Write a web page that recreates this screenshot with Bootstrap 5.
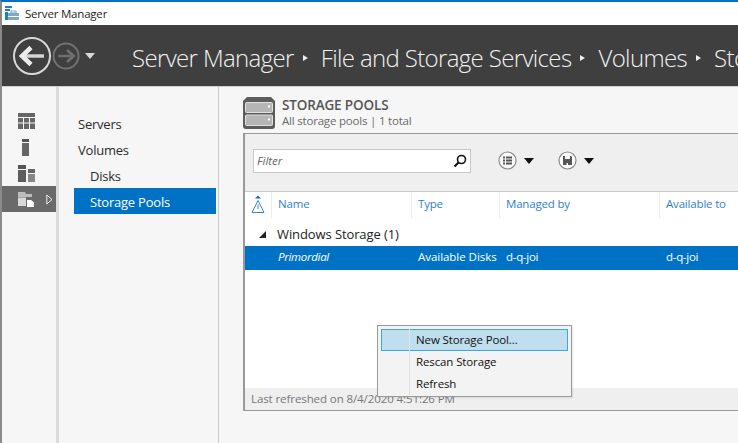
<!DOCTYPE html>
<html lang="en"><head><meta charset="utf-8"><title>Server Manager</title>
<link href="https://cdn.jsdelivr.net/npm/bootstrap@5.3.0/dist/css/bootstrap.min.css" rel="stylesheet">
<style>
html,body{height:100%;overflow:hidden}
body{font-family:"Open Sans","Noto Sans",sans-serif;font-size:12px;background:#f6f6f6;color:#1e1e1e}
.shell{width:738px;height:443px;border-top:2px solid #0072c6;border-left:2px solid #8a8a8a;position:relative;overflow:hidden}
.titlebar{height:23px;background:#fff;font-size:11.5px;letter-spacing:-.2px;padding-left:3px;gap:5px}
.headbar{height:62px;background:#3f3f3f;border-bottom:1px solid #cfcfcf;color:#f2f2f2;white-space:nowrap;overflow:hidden;padding-left:11px}
.navarrows{flex:none}
.crumbs{margin-left:35px;padding-top:4px;font-size:24px;letter-spacing:-.64px;font-weight:300;flex:none}
.crumbs i{display:inline-block;border-left:5px solid #eee;border-top:3.5px solid transparent;border-bottom:3.5px solid transparent;margin:0 13px 4px 9px;vertical-align:middle}
.work{height:356px}
.rail{width:54px;flex:none;padding-top:21px}
.railitem{height:26px;padding-left:16px}
.railarrow{margin-left:11px}
.railnarrow{margin-left:4px}
.railon{background:#6a6a6a}
.split{width:3px;background:#dcdcdc;flex:none}
.navcol{width:160px;flex:none;border-right:1px solid #c8c8c8;padding:23px 2px 0 15px;font-size:13px;letter-spacing:-.22px}
.navline{height:26px;padding-left:4px;padding-top:4px;color:#2b2b2b}
.navsub{padding-left:16px}
.navon{background:#0072c6;color:#fff}
.maincol{flex:1;min-width:0;padding:10px 0 0 24px}
.headtitle{gap:3px;height:36px}
.pooltitle{font-weight:600;font-size:13.5px;letter-spacing:-.15px;color:#555;line-height:15px;margin-top:1px}
.poolsub{color:#6b6b6b;font-size:11.5px;letter-spacing:-.2px;line-height:16px}
.panel{height:278px;width:560px;border:1px solid #999;border-right:0;border-left-width:2px;background:#fff}
.toolbar{height:58px;background:#efefef;border-bottom:1px solid #c8c8c8;padding:0 0 4px 8px;flex:none}
.filterbox{width:218px;height:24px;background:#fff;border:1px solid #c8c8c8;font-style:italic;color:#666;padding:0 3px;font-size:11.5px}
.toolbtn{gap:7px}
.caret{border-top:6px solid #111;border-left:5.5px solid transparent;border-right:5.5px solid transparent}
.colhead{height:26px;flex:none;color:#2f7fc9;font-size:11.5px;letter-spacing:-.18px}
.colhead>div{padding:0 0 2px 6px;border-left:1px solid #ececec;height:100%;display:flex;align-items:center}
.c0{width:26px;flex:none;padding-left:0!important;border-left:0!important;justify-content:center}
.c1{width:140px;flex:none}.c2{width:88px;flex:none}.c3{width:160px;flex:none}.c4{flex:1}
.groupline{height:28px;padding:5px 0 0 14px;color:#222;font-size:13px;letter-spacing:-.1px;gap:11px;flex:none}
.tri{width:0;height:0;border-bottom:7px solid #222;border-left:7px solid transparent}
.rowsel{height:24px;background:#0072c6;color:#fff;font-size:11.5px;letter-spacing:-.3px;flex:none;padding-bottom:2px}
.rowsel>div{padding-left:7px}
.rowsel>.c2{letter-spacing:-.04px}
.foot{height:22px;flex:none;background:#efefef;color:#777;font-size:11.5px;letter-spacing:-.09px;padding-left:6px}
.ctxmenu{position:absolute;left:375px;top:323px;width:195px;height:72px;background:#f3f3f3;border:1px solid #999;padding:3px;font-size:11.5px;letter-spacing:-.12px;color:#111;box-shadow:1px 1px 2px rgba(0,0,0,.1)}
.ctxitem{height:22px;padding-left:34px;border:1px solid transparent;position:relative}
.ctxitem::before{content:"";position:absolute;left:27px;top:-1px;bottom:-1px;width:1px;background:#e2e2e2}
.ctxon{background:#bfdfee;border-color:#3ba5e0}
</style></head><body>
<div class="shell">
<div class="titlebar d-flex align-items-center">
<svg width="15" height="15" viewBox="0 0 15 15"><rect x="0" y="0" width="7" height="2" fill="#1b80c8"/><rect x="0" y="3" width="5" height="2" fill="#1b80c8"/><rect x="0" y="6" width="3" height="8" fill="#1b80c8"/><rect x="3" y="7" width="11" height="7" rx="1" fill="#7fa8c0"/><rect x="6" y="5" width="5" height="2" fill="none" stroke="#7fa8c0"/><rect x="3" y="10" width="11" height="1" fill="#fff"/></svg>
<span>Server Manager</span></div>
<div class="headbar d-flex align-items-center">
<svg class="navarrows" width="84" height="42" viewBox="0 0 84 42"><circle cx="19" cy="21" r="18" fill="none" stroke="#d8d8d8" stroke-width="2"/><path d="M10 21H31" stroke="#d4d4d4" stroke-width="3.500" fill="none"/><path d="M18 12.500 9 21 18 29.500" stroke="#ececec" stroke-width="4.500" fill="none"/><circle cx="53" cy="21" r="12.500" fill="none" stroke="#727272" stroke-width="2"/><path d="M45 21H60" stroke="#6e6e6e" stroke-width="2.500" fill="none"/><path d="M54 15 60.500 21 54 27" stroke="#6e6e6e" stroke-width="3" fill="none"/><path d="M72 18 H82 L77 24 Z" fill="#d8d8d8"/></svg>
<div class="crumbs">Server Manager<i></i>File and Storage Services<i></i>Volumes<i></i>Storage Pools</div>
</div>
<div class="work d-flex">
<div class="rail d-flex flex-column">
<div class="railitem d-flex align-items-center"><svg width="17" height="16" viewBox="0 0 17 16"><path fill="#666" d="M0 0H17V4H0ZM0 5H5V9.500H0ZM6 5H11V9.500H6ZM12 5H17V9.500H12ZM0 10.500H5V16H0ZM6 10.500H11V16H6ZM12 10.500H17V16H12Z"/></svg></div>
<div class="railitem d-flex align-items-center"><svg class="railnarrow" width="7" height="17" viewBox="0 0 7 17"><rect width="7" height="3" fill="#555"/><rect y="4" width="7" height="13" fill="#666"/></svg></div>
<div class="railitem d-flex align-items-center"><svg width="17" height="17" viewBox="0 0 17 17"><rect width="8" height="4" fill="#555"/><rect y="5" width="8" height="12" fill="#5e5e5e"/><rect x="10" y="4" width="7" height="4" fill="#666"/><rect x="10" y="9" width="7" height="8" fill="#888"/></svg></div>
<div class="railitem railon d-flex align-items-center"><svg width="17" height="16" viewBox="0 0 17 16"><path fill="#bdbdbd" d="M0 1H7L8 3H14V6H0Z"/><path fill="#d8d8d8" d="M0 6.500H8V15H0Z"/><path fill="#fff" d="M9 9H13L16 11.500V16H9Z"/></svg><svg class="railarrow" width="7" height="11" viewBox="0 0 7 11"><path d="M.8 1 6 5.500 .8 10Z" fill="none" stroke="#eee"/></svg></div>
</div>
<div class="split"></div>
<div class="navcol">
<div class="navline d-flex align-items-center">Servers</div>
<div class="navline d-flex align-items-center">Volumes</div>
<div class="navline navsub d-flex align-items-center">Disks</div>
<div class="navline navsub navon d-flex align-items-center">Storage Pools</div>
</div>
<div class="maincol">
<div class="headtitle d-flex">
<svg width="32" height="32" viewBox="0 0 32 32"><path fill="#5c5c5c" d="M4 0H28L32 4V29Q32 32 29 32H3Q0 32 0 29V4Z"/><rect x="2.500" y="5.500" width="27" height="10" rx="1" fill="#b5b5b5" stroke="#e0e0e0"/><rect x="2.500" y="18" width="27" height="10.500" rx="1" fill="#b5b5b5" stroke="#e0e0e0"/><rect x="25" y="8.500" width="2" height="2" fill="#fff"/><rect x="25" y="21.500" width="2" height="2" fill="#fff"/></svg>
<div class="ps-1"><div class="pooltitle">STORAGE POOLS</div><div class="poolsub">All storage pools | 1 total</div></div>
</div>
<div class="panel d-flex flex-column">
<div class="toolbar d-flex align-items-center">
<div class="filterbox d-flex align-items-center justify-content-between"><span>Filter</span><svg width="14" height="14" viewBox="0 0 14 14"><circle cx="8.500" cy="5.500" r="4" fill="none" stroke="#111" stroke-width="1.600"/><path d="M5.500 8.500 1.500 12.500" stroke="#111" stroke-width="2.200"/></svg></div>
<div class="toolbtn d-flex align-items-center" style="margin-left:27px"><svg width="19" height="19" viewBox="0 0 19 19"><circle cx="9.500" cy="9.500" r="8.500" fill="#fafafa" stroke="#8a8a8a" stroke-width="1.200"/><path fill="#555" d="M5 5.500H7V7.500H5ZM8 5.500H14V7.500H8ZM5 8.500H7V10.500H5ZM8 8.500H14V10.500H8ZM5 11.500H7V13.500H5ZM8 11.500H14V13.500H8Z"/></svg><div class="caret"></div></div>
<div class="toolbtn d-flex align-items-center" style="margin-left:24px"><svg width="19" height="19" viewBox="0 0 19 19"><circle cx="9.500" cy="9.500" r="8.500" fill="#fafafa" stroke="#8a8a8a" stroke-width="1.200"/><path fill="#555" fill-rule="evenodd" d="M5 5H13L14 6V14H5ZM7 5V8H12V5ZM8.500 12V14H10V12Z"/></svg><div class="caret"></div></div>
</div>
<div class="colhead d-flex">
<div class="c0"><svg width="14" height="19" viewBox="0 0 14 19"><path d="M4 3.500 7 .5 10 3.500Z" fill="#0072c6"/><path d="M7 5.500 13 17.500H1Z" fill="none" stroke="#3a86c8"/><path d="M7 9.500V14" stroke="#3a86c8"/></svg></div>
<div class="c1">Name</div><div class="c2">Type</div><div class="c3">Managed by</div><div class="c4">Available to</div>
</div>
<div class="groupline d-flex align-items-center"><span class="tri"></span><span>Windows Storage (1)</span></div>
<div class="rowsel d-flex align-items-center">
<div class="c0"></div><div class="c1 fst-italic">Primordial</div><div class="c2 text-nowrap">Available Disks</div><div class="c3">d-q-joi</div><div class="c4">d-q-joi</div>
</div>
<div class="flex-grow-1"></div>
<div class="foot d-flex align-items-center">Last refreshed on 8/4/2020 4:51:26 PM</div>
</div>
</div>
</div>
<div class="ctxmenu">
<div class="ctxitem ctxon d-flex align-items-center">New Storage Pool...</div>
<div class="ctxitem d-flex align-items-center">Rescan Storage</div>
<div class="ctxitem d-flex align-items-center">Refresh</div>
</div>
</div>
<script src="https://cdn.jsdelivr.net/npm/bootstrap@5.3.0/dist/js/bootstrap.bundle.min.js"></script>
</body></html>
